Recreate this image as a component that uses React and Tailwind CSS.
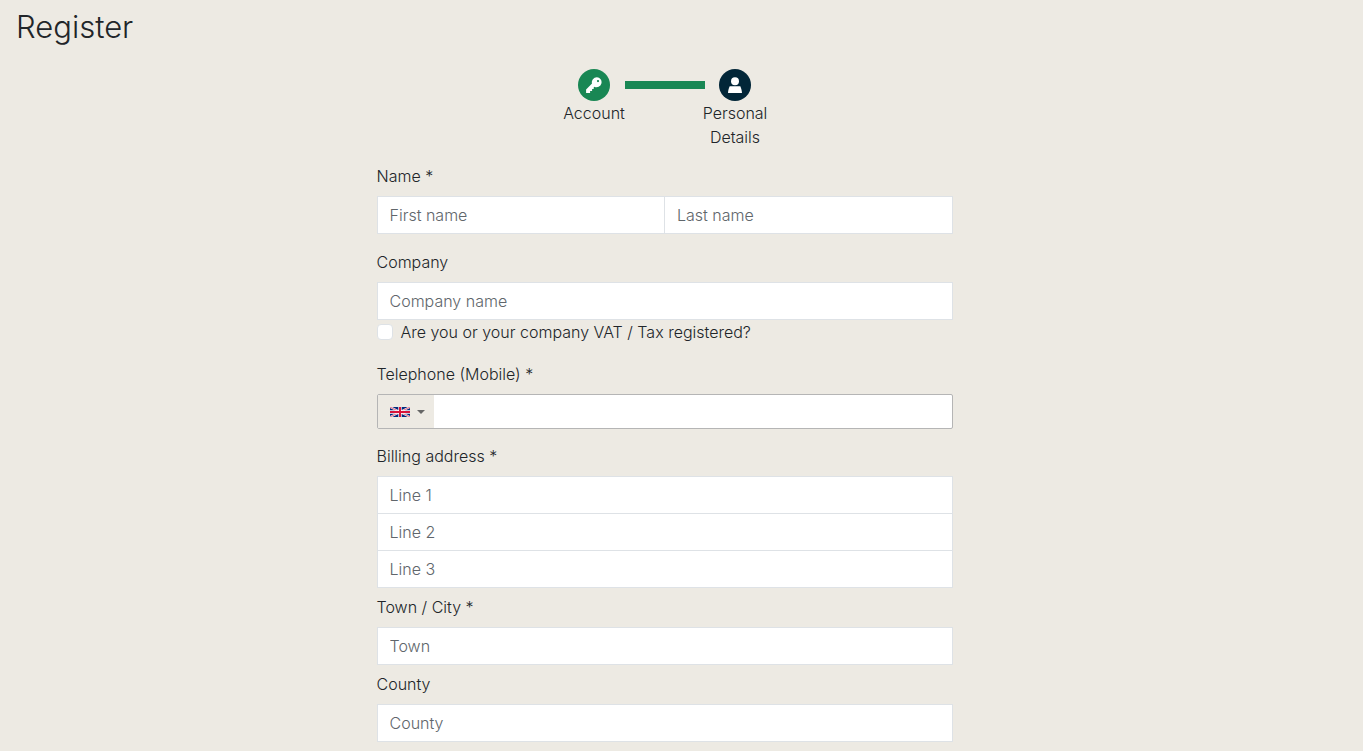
import React from "react";

const label = "block text-base leading-6 mb-2";
const input =
  "block w-full h-[38px] px-3 bg-white border border-[#dee2e6] text-base leading-6 text-[#212529] placeholder:text-[#60666b] placeholder:opacity-100 outline-none focus:border-[#86b7fe]";

function KeyIcon() {
  return (
    <svg viewBox="0 0 16 16" className="size-4" fill="currentColor" aria-hidden="true">
      <path
        fillRule="evenodd"
        d="M10.9.2A5 5 0 0 0 6 6.500L.1 12.400V16h4v-2h2v-2h1.600v-1.600l.7-.7A5 5 0 1 0 10.900.2Zm1.100 2.800a1.100 1.100 0 1 1 0 2.200 1.100 1.100 0 0 1 0-2.200Z"
      />
    </svg>
  );
}

function PersonIcon() {
  return (
    <svg viewBox="0 0 16 16" className="size-4" fill="currentColor" aria-hidden="true">
      <circle cx="8" cy="4.200" r="4" />
      <path d="M2.700 9.300h10.600c.9 1.700 1.500 4 1.700 6.600H1c.2-2.600.8-4.900 1.700-6.600Z" />
    </svg>
  );
}

function Flag() {
  return (
    <svg viewBox="0 0 60 30" className="w-5 h-[10px]" aria-hidden="true">
      <path d="M0 0h60v30H0z" fill="#012a7d" />
      <path d="M0 0l60 30M60 0L0 30" stroke="#fff" strokeWidth="6" />
      <path d="M0 0l60 30M60 0L0 30" stroke="#d8143a" strokeWidth="2" />
      <path d="M30 0v30M0 15h60" stroke="#fff" strokeWidth="10" />
      <path d="M30 0v30M0 15h60" stroke="#d8143a" strokeWidth="6" />
    </svg>
  );
}

function Step({ icon, text, color }) {
  return (
    <li className="flex w-[61px] flex-col items-center text-center">
      <span className={`flex size-8 items-center justify-center rounded-full text-white ${color}`}>
        {icon}
      </span>
      <span className="leading-6">{text}</span>
    </li>
  );
}

function Field({ id, title, placeholder }) {
  return (
    <div>
      <label htmlFor={id} className={label}>{title}</label>
      <input id={id} type="text" placeholder={placeholder} className={input} />
    </div>
  );
}

export default function App() {
  return (
    <div className="min-h-screen bg-[#edeae3] pl-4 pr-[50px] pt-2 pb-2 font-['Inter',sans-serif] font-light text-[#212529]">
      <h1 className="text-[31px] leading-[38px]">Register</h1>

      <main className="mx-auto mt-[23px] max-w-[576px]">
        <ol className="flex justify-center">
          <Step icon={<KeyIcon />} text="Account" color="bg-[#198754]" />
          <li aria-hidden="true" className="mt-3 h-2 w-20 bg-[#198754]" />
          <Step icon={<PersonIcon />} text="Personal Details" color="bg-[#022638]" />
        </ol>

        <form className="mt-[15px]">
          <fieldset>
            <legend className={label}>Name *</legend>
            <div className="flex">
              <input type="text" aria-label="First name" placeholder="First name" className={input} />
              <input type="text" aria-label="Last name" placeholder="Last name" className={`${input} -ml-px`} />
            </div>
          </fieldset>

          <div className="mt-4">
            <Field id="company" title="Company" placeholder="Company name" />
            <div className="flex items-center gap-2">
              <input
                id="vat"
                type="checkbox"
                className="size-4 appearance-none rounded-[4px] border border-[#dee2e6] bg-white checked:bg-[#198754]"
              />
              <label htmlFor="vat" className="leading-6">
                Are you or your company VAT / Tax registered?
              </label>
            </div>
          </div>

          <div className="mt-[18px]">
            <label htmlFor="phone" className={label}>Telephone (Mobile) *</label>
            <div className="flex h-[35px] overflow-hidden rounded-[2px] border border-[#b5b5b5] bg-white">
              <button
                type="button"
                aria-label="Country: United Kingdom"
                className="flex w-14 shrink-0 items-center gap-[7px] bg-[#edeae3] pl-3"
              >
                <Flag />
                <svg viewBox="0 0 8 4" className="h-1 w-2" fill="#666" aria-hidden="true">
                  <path d="M0 0h8L4 4z" />
                </svg>
              </button>
              <input id="phone" type="tel" className="min-w-0 flex-1 px-3 text-base outline-none" />
            </div>
          </div>

          <fieldset className="mt-[15px]">
            <legend className={label}>Billing address *</legend>
            <input type="text" aria-label="Line 1" placeholder="Line 1" className={input} />
            <input type="text" aria-label="Line 2" placeholder="Line 2" className={`${input} -mt-px`} />
            <input type="text" aria-label="Line 3" placeholder="Line 3" className={`${input} -mt-px`} />
          </fieldset>

          <div className="mt-[7px] flex flex-col gap-[7px]">
            <Field id="town" title="Town / City *" placeholder="Town" />
            <Field id="county" title="County" placeholder="County" />
          </div>
        </form>
      </main>
    </div>
  );
}
